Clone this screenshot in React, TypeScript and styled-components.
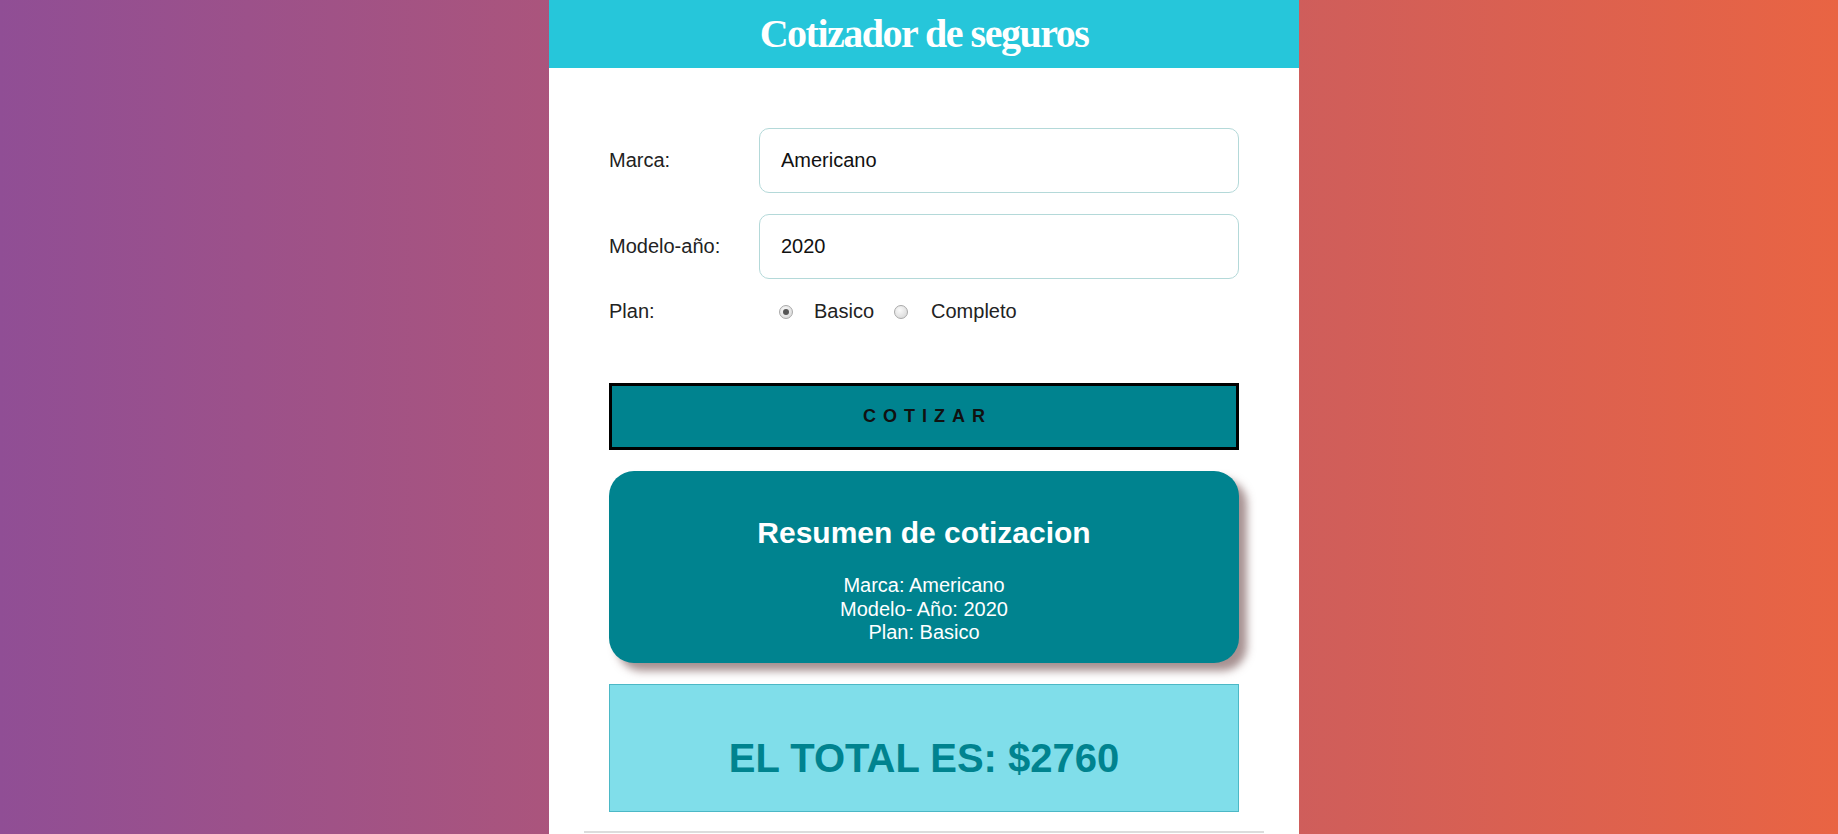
import React, { FC, useState } from 'react';
import styled, { createGlobalStyle } from 'styled-components';

const GlobalStyle = createGlobalStyle`
    html, body {
        margin: 0;
        padding: 0;
        min-height: 100%;
    }

    body {
        background: linear-gradient(to right, #904e95, #e96443);
        font-family: "Liberation Sans", Arial, sans-serif;
        min-height: 100vh;
    }
`;

const Page = styled.div`
    width: 750px;
    min-height: 100vh;
    margin-left: calc(50% - 370px);
    background-color: #fff;
    display: flex;
    flex-direction: column;
`;

const Header = styled.header`
    height: 68px;
    background-color: #26c6da;
    display: flex;
    align-items: center;
    justify-content: center;
`;

const Title = styled.h1`
    margin: 0 0 2px 0;
    font-family: "Liberation Serif", "Times New Roman", serif;
    font-weight: 700;
    font-size: 40px;
    letter-spacing: -1.5px;
    color: #fff;
`;

const Body = styled.div`
    padding: 60px 60px 0 60px;
    display: flex;
    flex-direction: column;
`;

const Form = styled.form`
    display: flex;
    flex-direction: column;
    gap: 21px;
`;

const Field = styled.div`
    display: flex;
    align-items: center;
`;

const Label = styled.label`
    flex: 0 0 150px;
    font-size: 20px;
    color: #222;
`;

const Input = styled.input`
    flex: 1;
    box-sizing: border-box;
    height: 65px;
    padding: 0 21px;
    border: 1px solid #b4d9d9;
    border-radius: 10px;
    font-family: "Liberation Sans", Arial, sans-serif;
    font-size: 20px;
    color: #111;
    outline: none;
`;

const RadioGroup = styled.div`
    display: flex;
    align-items: center;
    padding-left: 20px;
    height: 23px;
`;

const RadioOption = styled.label<{ $gap: number }>`
    display: flex;
    align-items: center;
    gap: ${(p) => p.$gap}px;
    margin-right: 20px;
    font-size: 20px;
    color: #222;
    cursor: pointer;
`;

const Radio = styled.input`
    appearance: none;
    margin: 0;
    width: 14px;
    height: 14px;
    border-radius: 50%;
    border: 1px solid #a9a9a9;
    background: radial-gradient(circle at 40% 35%, #fafafa, #d3d3d3);
    display: grid;
    place-items: center;

    &:checked::after {
        content: '';
        width: 6px;
        height: 6px;
        border-radius: 50%;
        background: #555;
    }
`;

const Button = styled.button`
    margin-top: 60px;
    height: 67px;
    box-sizing: border-box;
    border: 3px solid #000;
    background-color: #00838f;
    color: #111;
    font-family: "Liberation Sans", Arial, sans-serif;
    font-size: 18px;
    font-weight: 700;
    letter-spacing: 7px;
    text-indent: 7px;
    text-transform: uppercase;
    cursor: pointer;
`;

const Summary = styled.div`
    margin-top: 21px;
    height: 192px;
    box-sizing: border-box;
    padding: 45px 20px 0 20px;
    border-radius: 25px;
    background-color: #00838f;
    box-shadow: 8px 8px 9px rgba(95, 55, 55, 0.55);
    color: #fff;
    text-align: center;
`;

const SummaryTitle = styled.h2`
    margin: 0 0 24px 0;
    font-size: 30px;
    line-height: 34px;
    font-weight: 700;
`;

const SummaryList = styled.ul`
    margin: 0;
    padding: 0;
    list-style: none;
    font-size: 20px;
    line-height: 23.5px;
`;

const Total = styled.div`
    margin-top: 21px;
    height: 128px;
    box-sizing: border-box;
    padding-top: 50px;
    background-color: #80deea;
    border: 1px solid #4cb8c6;
    text-align: center;
`;

const TotalText = styled.p`
    margin: 0;
    font-size: 40px;
    line-height: 46px;
    font-weight: 700;
    color: #00838f;
`;

const Divider = styled.hr`
    margin: 19px 35px 0 35px;
    border: none;
    border-top: 2px solid #dcdcdc;
`;

const App: FC = () => {
    const [marca, setMarca] = useState('Americano');
    const [year, setYear] = useState('2020');
    const [plan, setPlan] = useState('basico');

    return (
        <>
            <GlobalStyle />
            <Page>
                <Header>
                    <Title>Cotizador de seguros</Title>
                </Header>
                <Body>
                    <Form onSubmit={(e) => e.preventDefault()}>
                        <Field>
                            <Label>Marca:</Label>
                            <Input value={marca} onChange={(e) => setMarca(e.target.value)} />
                        </Field>
                        <Field>
                            <Label>Modelo-año:</Label>
                            <Input value={year} onChange={(e) => setYear(e.target.value)} />
                        </Field>
                        <Field>
                            <Label>Plan:</Label>
                            <RadioGroup>
                                <RadioOption $gap={21}>
                                    <Radio
                                        type="radio"
                                        name="plan"
                                        checked={plan === 'basico'}
                                        onChange={() => setPlan('basico')}
                                    />
                                    Basico
                                </RadioOption>
                                <RadioOption $gap={23}>
                                    <Radio
                                        type="radio"
                                        name="plan"
                                        checked={plan === 'completo'}
                                        onChange={() => setPlan('completo')}
                                    />
                                    Completo
                                </RadioOption>
                            </RadioGroup>
                        </Field>
                    </Form>
                    <Button type="button">Cotizar</Button>
                    <Summary>
                        <SummaryTitle>Resumen de cotizacion</SummaryTitle>
                        <SummaryList>
                            <li>Marca: {marca}</li>
                            <li>Modelo- Año: {year}</li>
                            <li>Plan: {plan === 'basico' ? 'Basico' : 'Completo'}</li>
                        </SummaryList>
                    </Summary>
                    <Total>
                        <TotalText>EL TOTAL ES: $2760</TotalText>
                    </Total>
                </Body>
                <Divider />
            </Page>
        </>
    );
};

export default App;
